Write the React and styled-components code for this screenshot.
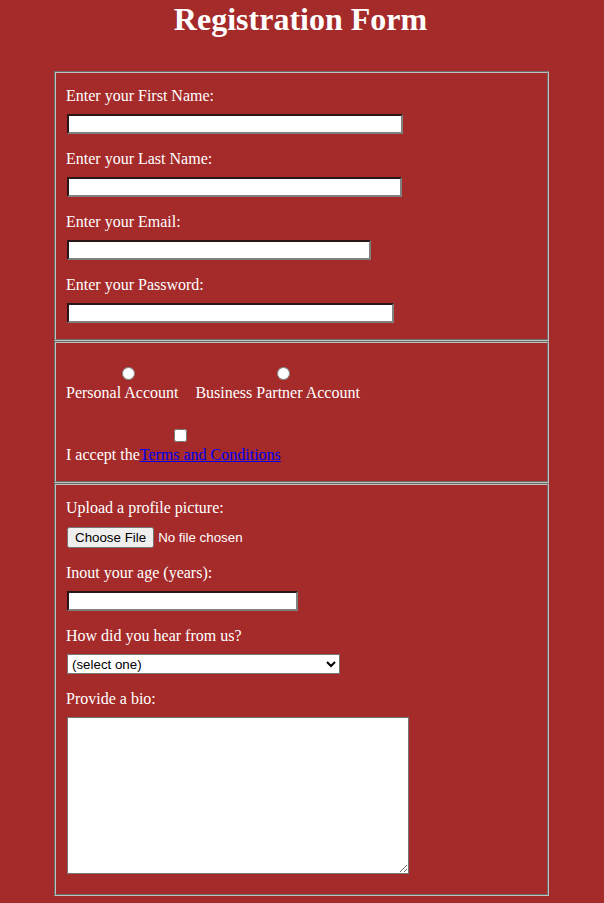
import React from 'react';
import styled, { createGlobalStyle } from 'styled-components';

const GlobalStyle = createGlobalStyle`
  html, body {
    margin: 0;
    background-color: #a52a2a;
  }
  body {
    color: #ffffff;
    font-family: "Liberation Serif", "Times New Roman", serif;
    font-size: 16px;
  }
`;

const Title = styled.h1`
  margin: 1px 0 34px;
  padding-right: 3px;
  font-size: 32px;
  font-weight: bold;
  text-align: center;
  line-height: 36px;
`;

const Form = styled.form`
  width: 495px;
  margin: 0 0 0 54px;
`;

const Section = styled.fieldset`
  margin: 0;
  border: 2px groove #c0c0c0;
  padding: ${p => p.$top}px 10px ${p => p.$bottom}px;
  display: flex;
  flex-direction: column;
  align-items: flex-start;
`;

const Label = styled.label`
  display: block;
  line-height: 18px;
  margin-bottom: ${p => (p.$gap != null ? p.$gap : 9)}px;
`;

const TextInput = styled.input`
  box-sizing: border-box;
  width: ${p => p.$w}px;
  height: 20px;
  margin: 0 0 ${p => (p.$last ? 0 : 16)}px 1px;
  padding: 1px 2px;
  background: #ffffff;
  border-style: solid;
  border-width: 2px;
  border-color: #2a1616 #808080 #808080 #2a1616;
  font-size: 13.33px;
  font-family: "Liberation Sans", Arial, sans-serif;
`;

const FileInput = styled.input`
  margin: 0 0 16px 1px;
  height: 21px;
  color: #ffffff;
  font-size: 13.33px;
  font-family: "Liberation Sans", Arial, sans-serif;
`;

const Select = styled.select`
  box-sizing: border-box;
  width: 273px;
  height: 20px;
  margin: 0 0 16px 1px;
  font-size: 13.33px;
  font-family: "Liberation Sans", Arial, sans-serif;
  background: #ffffff;
  color: #000000;
  border: 1px solid #767676;
  border-radius: 0;
`;

const Bio = styled.textarea`
  box-sizing: border-box;
  width: 342px;
  height: 157px;
  margin: 0 0 0 1px;
  background: #ffffff;
  border: 1px solid #767676;
  resize: both;
`;

const ChoiceRow = styled.div`
  display: flex;
  gap: 17px;
  margin-bottom: ${p => p.$gap || 0}px;
`;

const Choice = styled.label`
  display: flex;
  flex-direction: column;
  align-items: center;
  gap: 4px;
  line-height: 18px;
`;

const Mark = styled.input`
  width: 13px;
  height: 13px;
  margin: 0 0 0 ${p => p.$shift}px;
`;

const Link = styled.a`
  color: #0000ee;
  text-decoration: underline;
`;

export default function App() {
  return (
    <>
      <GlobalStyle />
      <Title>Registration Form</Title>
      <Form onSubmit={e => e.preventDefault()}>
        <Section $top={14} $bottom={16}>
          <Label htmlFor="first">Enter your First Name:</Label>
          <TextInput id="first" type="text" $w={336} />
          <Label htmlFor="last">Enter your Last Name:</Label>
          <TextInput id="last" type="text" $w={335} />
          <Label htmlFor="email">Enter your Email:</Label>
          <TextInput id="email" type="email" $w={304} />
          <Label htmlFor="pass">Enter your Password:</Label>
          <TextInput id="pass" type="password" $w={327} $last />
        </Section>
        <Section $top={24} $bottom={17}>
          <ChoiceRow $gap={27}>
            <Choice>
              <Mark type="radio" name="account" $shift={12} />
              Personal Account
            </Choice>
            <Choice>
              <Mark type="radio" name="account" $shift={11} />
              Business Partner Account
            </Choice>
          </ChoiceRow>
          <ChoiceRow>
            <Choice>
              <Mark type="checkbox" $shift={14} />
              <span>I accept the<Link href="#">Terms and Conditions</Link></span>
            </Choice>
          </ChoiceRow>
        </Section>
        <Section $top={14} $bottom={20}>
          <Label htmlFor="pic" $gap={10}>Upload a profile picture:</Label>
          <FileInput id="pic" type="file" />
          <Label htmlFor="age">Inout your age (years):</Label>
          <TextInput id="age" type="number" $w={231} />
          <Label htmlFor="hear">How did you hear from us?</Label>
          <Select id="hear" defaultValue="">
            <option value="">(select one)</option>
            <option value="friend">Friend</option>
            <option value="web">Website</option>
          </Select>
          <Label htmlFor="bio">Provide a bio:</Label>
          <Bio id="bio" />
        </Section>
      </Form>
    </>
  );
}
